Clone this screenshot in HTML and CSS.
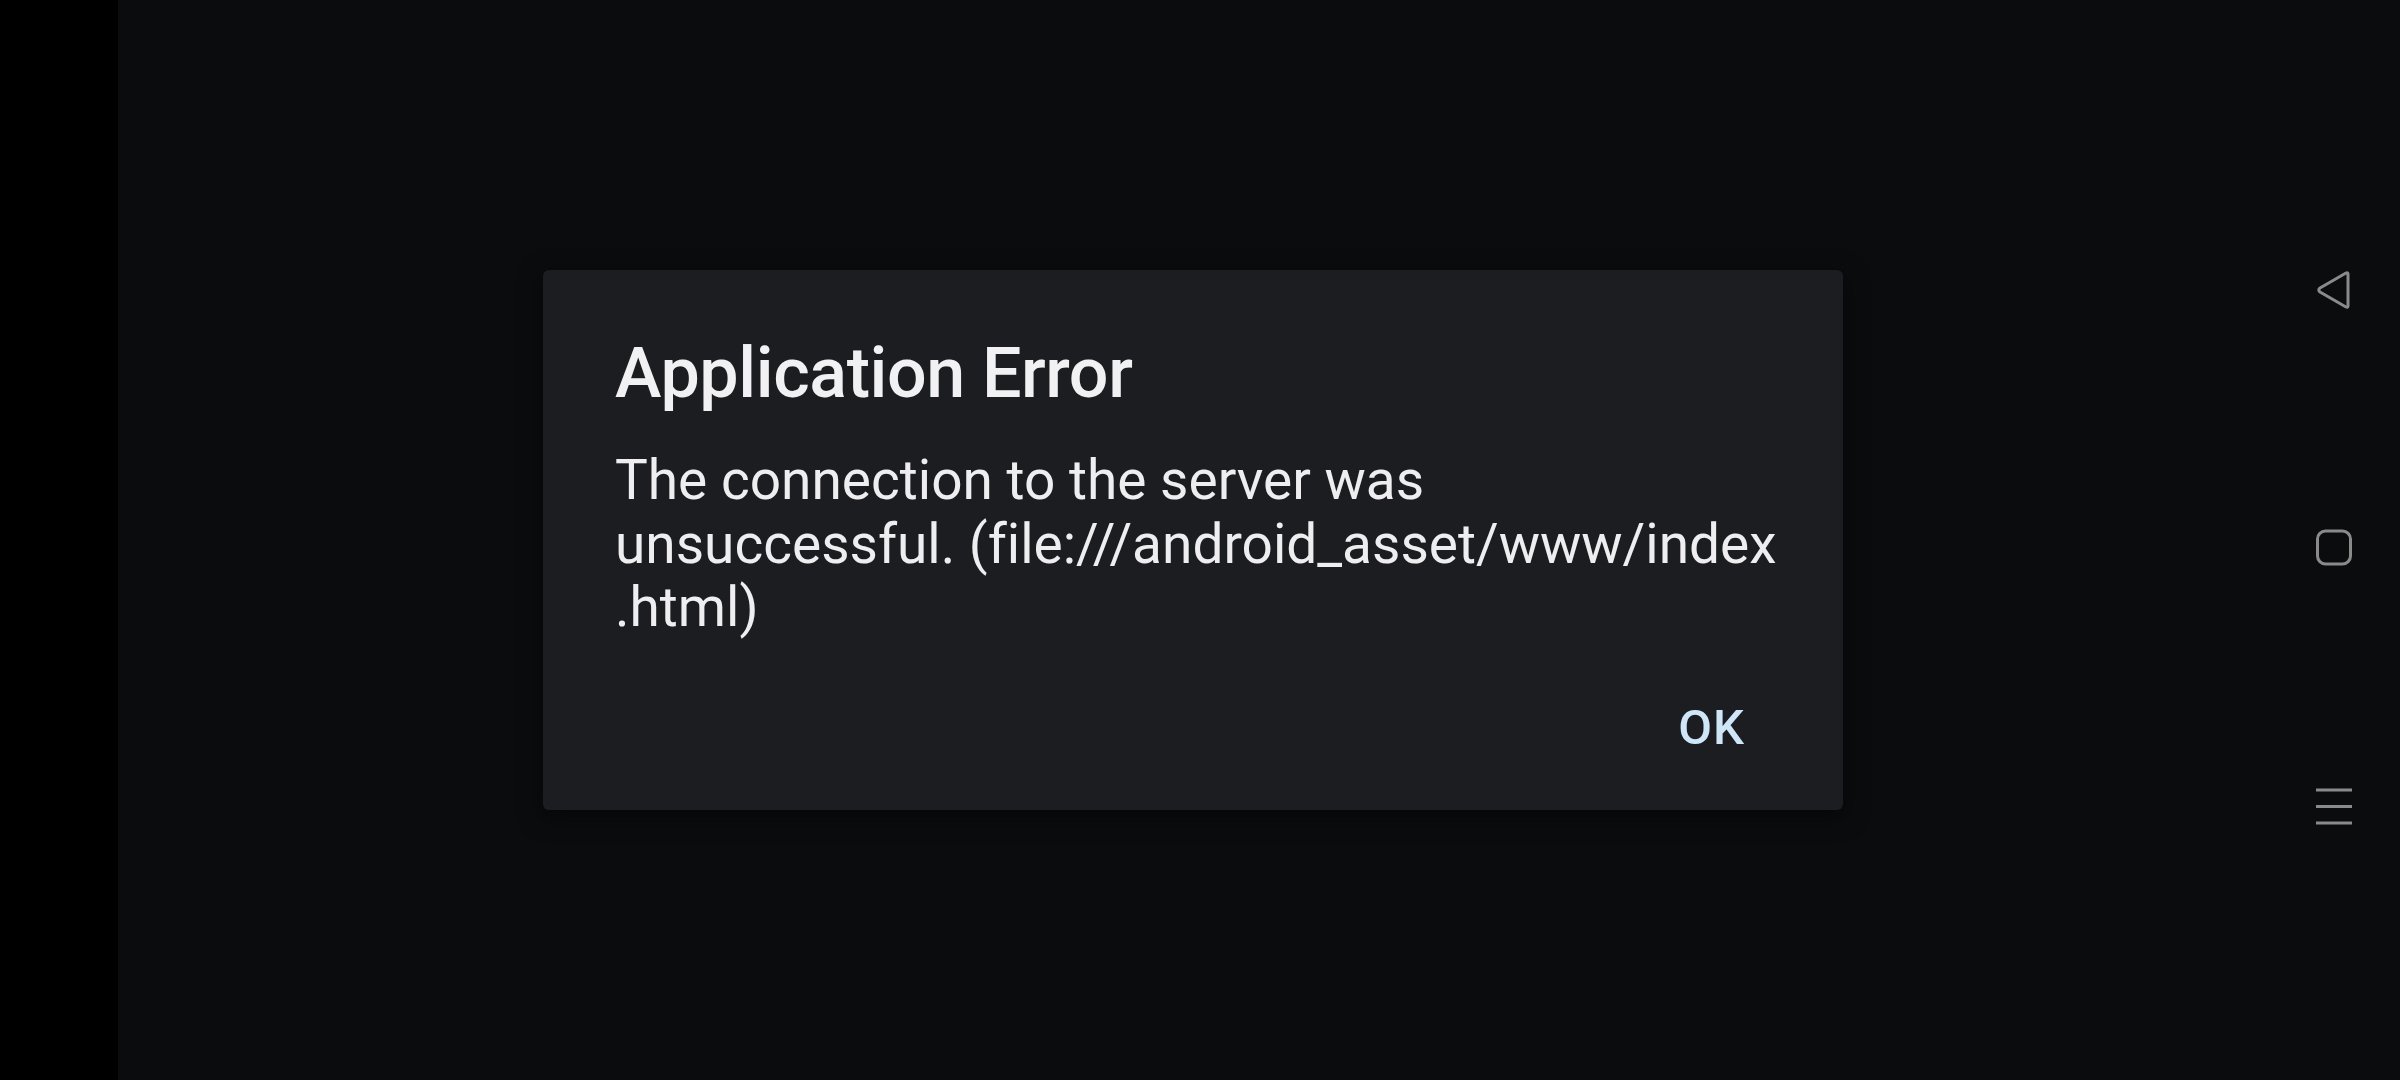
FILE: index.html
```html
<!DOCTYPE html>
<html lang="en">
<head>
<meta charset="utf-8">
<title>Application Error</title>
<link rel="stylesheet" href="styles.css">
</head>
<body>
<div class="screen">
  <div class="cutout"></div>
  <main class="app">
    <div class="dialog" role="alertdialog">
      <h1 class="dialog-title">Application Error</h1>
      <p class="dialog-message">The connection to the server was<br>unsuccessful. (file:///android_asset/www/index<br>.html)</p>
      <div class="dialog-actions">
        <button class="dialog-button">OK</button>
      </div>
    </div>
  </main>
  <nav class="navbar">
    <div class="nav-item">
      <svg width="40" height="40" viewBox="0 0 40 40"><path d="M34 4 L34 36 Q34 38 32 37 L6 22 Q3.5 20 6 18 L32 3 Q34 2 34 4 Z" fill="none" stroke="#8a8a8a" stroke-width="3" stroke-linejoin="round"/></svg>
    </div>
    <div class="nav-item">
      <svg width="40" height="40" viewBox="0 0 40 40"><rect x="3.5" y="3" width="33" height="33" rx="8" fill="none" stroke="#8a8a8a" stroke-width="3"/></svg>
    </div>
    <div class="nav-item">
      <svg width="40" height="40" viewBox="0 0 40 40"><path d="M2 4 H38 M2 20.5 H38 M2 37 H38" stroke="#8a8a8a" stroke-width="3"/></svg>
    </div>
  </nav>
</div>
</body>
</html>
```
FILE: styles.css
```css
* { box-sizing: border-box; }
html, body {
  margin: 0;
  padding: 0;
  width: 2400px;
  height: 1080px;
  background: #0b0c0e;
  overflow: hidden;
  font-family: Roboto, "Noto Sans", "Liberation Sans", sans-serif;
  font-variant-ligatures: none;
}
.screen {
  display: flex;
  width: 2400px;
  height: 1080px;
}
.cutout {
  width: 118px;
  flex: none;
  background: #000000;
}
.app {
  flex: 1;
  display: flex;
  align-items: center;
  justify-content: center;
  background: #0b0c0e;
}
.dialog {
  width: 1300px;
  height: 540px;
  background: #1b1d20;
  border-radius: 6px;
  box-shadow: 0 6px 24px rgba(0, 0, 0, 0.55);
  padding: 61px 40px 54px 72px;
  display: flex;
  flex-direction: column;
}
.dialog-title {
  margin: 0;
  font-size: 70px;
  font-weight: 500;
  line-height: 84px;
  letter-spacing: -0.4px;
  color: #f1f1f3;
}
.dialog-message {
  margin: 34px 0 0 0;
  font-size: 55px;
  font-weight: 400;
  line-height: 63.5px;
  color: #eeeef0;
  white-space: nowrap;
}
.dialog-actions {
  margin-top: auto;
  display: flex;
  justify-content: flex-end;
  padding-right: 58px;
}
.dialog-button {
  background: none;
  border: none;
  padding: 0;
  font-family: inherit;
  font-size: 49px;
  font-weight: 500;
  line-height: 56px;
  color: #cde7f8;
  letter-spacing: 1px;
}
.navbar {
  width: 132px;
  flex: none;
  display: flex;
  flex-direction: column;
  align-items: center;
  justify-content: center;
  gap: 158px;
  padding-top: 16px;
}
.nav-item {
  width: 100px;
  height: 100px;
  display: flex;
  align-items: center;
  justify-content: center;
}
.nav-item svg { display: block; }
```
